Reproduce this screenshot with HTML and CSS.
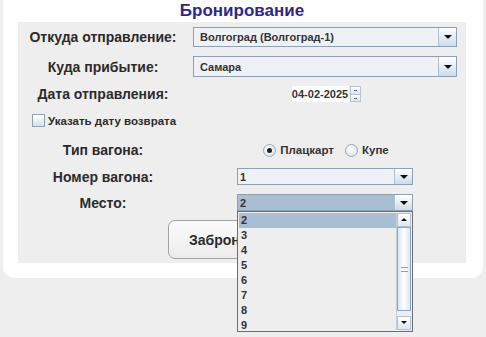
FILE: index.html
```html
<!DOCTYPE html>
<html lang="ru">
  <head>
    <meta charset="UTF-8" />
    <meta name="viewport" content="width=device-width, initial-scale=1.0" />
    <title>Бронирование</title>
    <link rel="stylesheet" href="styles.css">
  </head>
  <body>
    <div class="sheet">
      <h1 class="title">Бронирование</h1>

      <div class="form">
        <div class="row r1">
          <div class="lbl">Откуда отправление:</div>
          <div class="field">
            <div class="combo wide">
              <span class="value">Волгоград (Волгоград-1)</span>
              <span class="arrow"></span>
            </div>
          </div>
        </div>

        <div class="row r2">
          <div class="lbl">Куда прибытие:</div>
          <div class="field">
            <div class="combo wide tall">
              <span class="value">Самара</span>
              <span class="arrow"></span>
            </div>
          </div>
        </div>

        <div class="row r3">
          <div class="lbl">Дата отправления:</div>
          <div class="field">
            <div class="date">
              <span class="date-text">04-02-2025</span>
              <span class="spin"><span class="up"></span><span class="down"></span></span>
            </div>
          </div>
        </div>

        <div class="row r4">
          <div class="check"><span class="box"></span>Указать дату возврата</div>
        </div>

        <div class="row r5">
          <div class="lbl">Тип вагона:</div>
          <div class="field">
            <div class="radios">
              <span class="radio on"></span><span class="rtext">Плацкарт</span>
              <span class="radio"></span><span class="rtext">Купе</span>
            </div>
          </div>
        </div>

        <div class="row r6">
          <div class="lbl">Номер вагона:</div>
          <div class="field">
            <div class="combo narrow">
              <span class="value">1</span>
              <span class="arrow"></span>
            </div>
          </div>
        </div>

        <div class="row r7">
          <div class="lbl">Место:</div>
          <div class="field">
            <div class="combo narrow open">
              <span class="value selected">2</span>
              <span class="arrow"></span>

              <div class="popup">
                <ul class="items">
                  <li class="hl">2</li>
                  <li>3</li>
                  <li>4</li>
                  <li>5</li>
                  <li>6</li>
                  <li>7</li>
                  <li>8</li>
                  <li>9</li>
                </ul>
                <div class="scroll">
                  <span class="sbtn"><span class="tri-up"></span></span>
                  <span class="thumb"><span class="grip"></span></span>
                  <span class="track"></span>
                  <span class="sbtn"><span class="tri-down"></span></span>
                </div>
              </div>
            </div>
          </div>
        </div>

        <div class="actions">
          <button class="book">Забронировать</button>
        </div>
      </div>
    </div>
  </body>
</html>
```

FILE: styles.css
```css
html,
body {
  min-height: 100vh;
}

body {
  margin: 0;
  padding: 0;
  background-color: #eeeeee;
  font-family: "Liberation Sans", Arial, sans-serif;
  color: #333333;
}

.sheet {
  margin-left: 3px;
  width: 448px;
  padding: 0 17px 15px 15px;
  background-color: #ffffff;
  border-radius: 0 0 12px 12px;
}

.title {
  margin: 0;
  height: 22px;
  line-height: 21px;
  font-size: 17px;
  font-weight: bold;
  text-align: center;
  color: #2e2688;
}

.form {
  background-color: #eeeeee;
  padding-bottom: 4px;
}

.row {
  display: grid;
  grid-template-columns: 170px 274px;
  align-items: center;
}

.r1 { height: 30px; }
.r2 { height: 29px; }
.r3 { height: 26px; }
.r4 { height: 27px; display: flex; }
.r5 { height: 32px; }
.r6 { height: 21px; }
.r7 { height: 31px; }

.lbl {
  text-align: center;
  font-size: 14px;
  font-weight: bold;
  color: #2b2b2b;
}

.field {
  display: flex;
  justify-content: center;
}

/* combo boxes */
.combo {
  position: relative;
  display: flex;
  box-sizing: border-box;
  border: 1px solid #8da0b4;
  background-color: #eef1f5;
  font-size: 11px;
  font-weight: bold;
}

.combo.wide {
  width: 264px;
  height: 20px;
}

.combo.tall {
  height: 21px;
}

.combo.narrow {
  width: 176px;
  height: 17px;
}

.value {
  flex: 1;
  padding-left: 6px;
  display: flex;
  align-items: center;
}

.combo.narrow .value {
  padding-left: 2px;
}

.value.selected {
  background-color: #a9bdd3;
}

.arrow {
  width: 17px;
  border-left: 1px solid #aebfd0;
  background: linear-gradient(#ffffff, #cddbe9);
  position: relative;
}

.arrow::after {
  content: "";
  position: absolute;
  left: 5px;
  top: 50%;
  margin-top: -2px;
  border-left: 4px solid transparent;
  border-right: 4px solid transparent;
  border-top: 4px solid #111111;
}

/* date spinner */
.date {
  display: flex;
  align-items: stretch;
  height: 16px;
  margin-left: 2px;
}

.date-text {
  width: 57px;
  background-color: #ffffff;
  font-size: 11px;
  font-weight: bold;
  display: flex;
  align-items: center;
  justify-content: center;
}

.spin {
  width: 11px;
  margin-left: 1px;
  display: flex;
  flex-direction: column;
  border: 1px solid #b8c4d0;
  box-sizing: border-box;
}

.spin span {
  flex: 1;
  background: linear-gradient(#fdfdfd, #dfe5eb);
  position: relative;
}

.spin .up {
  border-bottom: 1px solid #b8c4d0;
}

.spin .up::after,
.spin .down::after {
  content: "";
  position: absolute;
  left: 3px;
  width: 3px;
  height: 1px;
  top: 3px;
  background-color: #666666;
}

/* checkbox */
.check {
  display: flex;
  align-items: center;
  padding-left: 14px;
  font-size: 11.5px;
  font-weight: bold;
  color: #2b2b2b;
}

.box {
  width: 11px;
  height: 11px;
  border: 1px solid #8da0b4;
  background: linear-gradient(#ffffff, #d7e0ea);
  margin-right: 3px;
}

/* radios */
.radios {
  display: flex;
  align-items: center;
  font-size: 11.5px;
  font-weight: bold;
  margin-left: 2px;
}

.radio {
  width: 11px;
  height: 11px;
  border-radius: 50%;
  border: 1px solid #97a8ba;
  background: radial-gradient(circle at 40% 35%, #ffffff, #d3dde8);
  position: relative;
  margin-right: 4px;
}

.radio.on::after {
  content: "";
  position: absolute;
  left: 3px;
  top: 3px;
  width: 5px;
  height: 5px;
  border-radius: 50%;
  background-color: #222222;
}

.rtext {
  margin-right: 11px;
}

.rtext:last-child {
  margin-right: 0;
}

/* button */
.actions {
  display: flex;
  justify-content: center;
  padding-top: 2px;
}

.book {
  width: 151px;
  height: 39px;
  margin-left: 2px;
  font-family: "Liberation Sans", Arial, sans-serif;
  font-size: 14px;
  font-weight: bold;
  color: #2b2b2b;
  background: linear-gradient(#fbfbfb, #ececec);
  border: 1px solid #a3a3a3;
  border-radius: 7px;
}

/* open popup list */
.popup {
  position: absolute;
  left: -1px;
  top: 16px;
  width: 176px;
  height: 121px;
  box-sizing: border-box;
  border: 1px solid #6d6d6d;
  background-color: #eeeeee;
  display: flex;
  padding: 1px;
  z-index: 5;
}

.items {
  list-style: none;
  margin: 0;
  padding: 0;
  flex: 1;
}

.items li {
  height: 15px;
  line-height: 15px;
  padding-left: 2px;
  font-size: 11px;
}

.items li.hl {
  background-color: #a9bdd3;
}

.scroll {
  width: 14px;
  display: flex;
  flex-direction: column;
  border-left: 1px solid #c4cfda;
}

.sbtn {
  height: 12px;
  border: 1px solid #b4c2d0;
  background: linear-gradient(#ffffff, #dde5ee);
  position: relative;
}

.thumb {
  height: 82px;
  border: 1px solid #8ea6c6;
  background: linear-gradient(90deg, #dbe6f3, #ffffff, #dbe6f3);
  position: relative;
}

.grip {
  position: absolute;
  left: 3px;
  top: 39px;
  width: 7px;
  height: 3px;
  border-top: 1px solid #8ea6c6;
  border-bottom: 1px solid #8ea6c6;
}

.track {
  flex: 1;
  background-color: #eeeeee;
}

.tri-up,
.tri-down {
  position: absolute;
  left: 3px;
  top: 4px;
  border-left: 3px solid transparent;
  border-right: 3px solid transparent;
}

.tri-up {
  border-bottom: 3px solid #111111;
}

.tri-down {
  border-top: 3px solid #111111;
}
```
